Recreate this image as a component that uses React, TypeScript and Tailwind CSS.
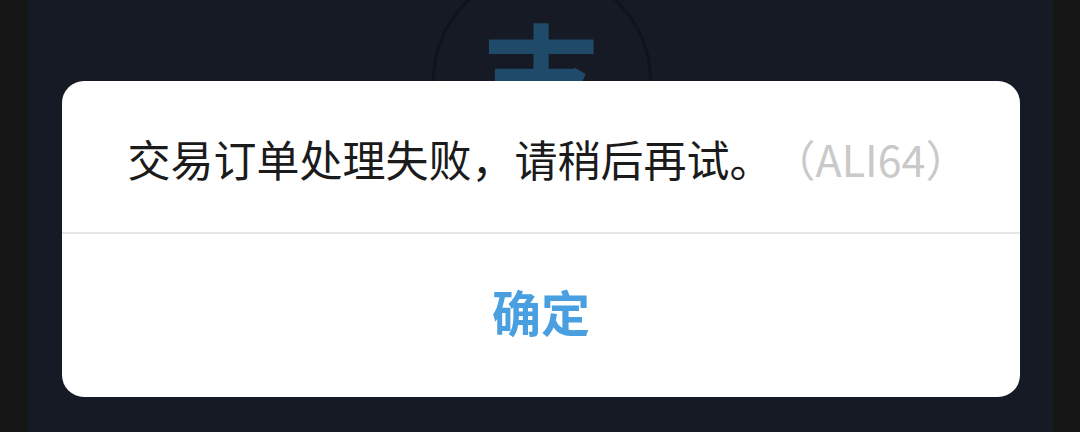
import React from "react";

const cjk = { fontFamily: '"Noto Sans CJK SC", "Noto Sans", sans-serif' };

export default function App() {
  return (
    <div className="relative w-[1080px] h-[432px] bg-[#161616] flex overflow-hidden" style={cjk}>
      <div className="ml-[28px] w-[1025px] h-full bg-[#151a25] flex justify-center">
        <div className="mt-[-30px] ml-[2px] w-[220px] h-[220px] rounded-full border-[3px] border-[#10131b] flex items-start justify-center">
          <span className="mt-[40px] text-[122px] leading-none font-bold text-[#1f4a69]">支</span>
        </div>
      </div>

      <div className="absolute left-[62px] top-[81px] w-[958px] h-[316px] bg-white rounded-[22px] flex flex-col">
        <div className="h-[151px] flex items-center justify-center pt-[4px] pl-[14px] text-[43px] leading-none text-[#1b1b1b]">
          交易订单处理失败，请稍后再试。<span className="text-[#c9c9c9]">（ALI64）</span>
        </div>
        <div className="h-[2px] bg-[#e6e6e6]" />
        <div className="flex-1 flex items-center justify-center pb-[10px] text-[49px] leading-none font-semibold text-[#4a9fe0]">
          确定
        </div>
      </div>
    </div>
  );
}
